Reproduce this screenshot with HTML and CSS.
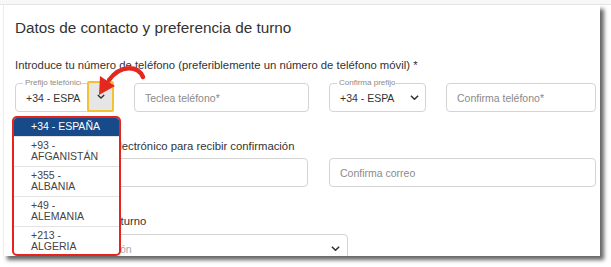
FILE: index.html
```html
<!DOCTYPE html>
<html lang="es">
<head>
<meta charset="utf-8">
<title>Datos de contacto y preferencia de turno</title>
<link rel="stylesheet" href="styles.css">
</head>
<body>
<div class="topbar"></div>
<main class="card">
  <h2 class="title">Datos de contacto y preferencia de turno</h2>

  <section class="group group-phone">
    <p class="label">Introduce tu número de teléfono (preferiblemente un número de teléfono móvil) *</p>
    <div class="phone-row">
      <div class="field select prefix">
        <span class="legend">Prefijo telefónico</span>
        <span class="value">+34 - ESPAÑA</span>
        <span class="toggle">
          <svg class="chevron" viewBox="0 0 9 5"><path d="M0.9 0.7 L4.5 4.2 L8.1 0.7" fill="none" stroke="#333" stroke-width="1.6"/></svg>
        </span>
        <ul class="dropdown">
          <li class="option selected">+34 - ESPAÑA</li>
          <li class="option">+93 - AFGANISTÁN</li>
          <li class="option">+355 - ALBANIA</li>
          <li class="option">+49 - ALEMANIA</li>
          <li class="option">+213 - ALGERIA</li>
        </ul>
      </div>
      <div class="field"><span class="placeholder">Teclea teléfono*</span></div>
      <div class="field select confirm-prefix">
        <span class="legend">Confirma prefijo</span>
        <span class="value">+34 - ESPAÑA</span>
        <svg class="chevron" viewBox="0 0 9 5"><path d="M0.9 0.7 L4.5 4.2 L8.1 0.7" fill="none" stroke="#333" stroke-width="1.6"/></svg>
      </div>
      <div class="field"><span class="placeholder">Confirma teléfono*</span></div>
    </div>
  </section>

  <section class="group">
    <p class="label">Introduce tu correo electrónico para recibir confirmación</p>
    <div class="email-row">
      <div class="field"><span class="placeholder">Correo electrónico</span></div>
      <div class="field"><span class="placeholder">Confirma correo</span></div>
    </div>
  </section>

  <section class="group">
    <p class="label">Selecciona franja de turno</p>
    <div class="field select turn">
      <span class="placeholder light">Selecciona una opción</span>
      <svg class="chevron" viewBox="0 0 9 5"><path d="M0.9 0.7 L4.5 4.2 L8.1 0.7" fill="none" stroke="#333" stroke-width="1.6"/></svg>
    </div>
  </section>

  <svg class="pointer-arrow" viewBox="0 0 611 267" aria-hidden="true">
    <path d="M143 77 C138 66 121 64 109 80" fill="none" stroke="#e4281f" stroke-width="4.5" stroke-linecap="round"/>
    <polygon points="100,76 115,86 99,95" fill="#e4281f"/>
  </svg>
</main>
</body>
</html>
```
FILE: styles.css
```css
* { box-sizing: border-box; }

html, body {
  margin: 0;
  padding: 0;
  background: #fff;
}

body {
  width: 611px;
  height: 267px;
  overflow: hidden;
  font-family: "Liberation Sans", Arial, sans-serif;
  color: #333;
}

.topbar {
  height: 5px;
  background: #f8f8f8;
  border-bottom: 1px solid #e6e6e6;
}

.card {
  position: relative;
  margin-left: 3px;
  width: 597px;
  height: 251px;
  padding: 14px 4px 0 11px;
  background: #fff;
  border-left: 1px solid #ececec;
  box-shadow: 4px 4px 4px rgba(0, 0, 0, 0.6);
  overflow: hidden;
}

.title {
  margin: 0;
  font-size: 15.3px;
  font-weight: normal;
  line-height: 18px;
  color: #333;
}

.group { margin-top: 27px; }
.group-phone { margin-top: 21px; }

.label {
  margin: 0;
  font-size: 11.3px;
  line-height: 14px;
  color: #333;
}

.phone-row {
  margin-top: 11px;
  display: grid;
  grid-template-columns: 99px 175px 97px 1fr;
  column-gap: 20px;
}

.email-row {
  margin-top: 5px;
  display: grid;
  grid-template-columns: 293px 1fr;
  column-gap: 21px;
}

.field {
  position: relative;
  height: 29px;
  border: 1px solid #d4d4d4;
  border-radius: 4px;
  padding: 0 10px;
  display: flex;
  align-items: center;
  font-size: 10.5px;
  background: #fff;
}

.placeholder { color: #8a8a8a; white-space: nowrap; }
.placeholder.light { color: #a8a8a8; }

.value {
  width: 55px;
  flex: none;
  overflow: hidden;
  white-space: nowrap;
  color: #333;
}

.legend {
  position: absolute;
  top: -6px;
  left: 7px;
  max-width: 58px;
  padding: 0 2px;
  overflow: hidden;
  white-space: nowrap;
  font-size: 8px;
  line-height: 10px;
  color: #8a8a8a;
  background: #fff;
}

.chevron {
  display: block;
  width: 9px;
  height: 5px;
  margin-left: auto;
}

.confirm-prefix { padding-right: 6px; }

.turn {
  margin-top: 6px;
  width: 333px;
  padding-right: 7px;
}

.toggle {
  position: absolute;
  left: 71px;
  top: -3px;
  width: 27px;
  height: 31px;
  border: 2px solid #f2c230;
  border-radius: 2px;
  background: #e6e6e6;
  display: flex;
  align-items: center;
  justify-content: center;
}

.toggle .chevron {
  margin: 0;
  width: 8px;
  height: 5px;
}

.dropdown {
  position: absolute;
  left: -4px;
  top: 32px;
  width: 109px;
  height: 140px;
  margin: 0;
  padding: 0;
  list-style: none;
  border: 2.5px solid #e8221c;
  border-radius: 5px;
  background: #fff;
  overflow: hidden;
  z-index: 2;
  font-size: 10.5px;
  line-height: 11.5px;
}

.option {
  padding: 3px 16px 3px 17px;
  border-top: 1px solid #e3e3e3;
  color: #444;
}

.option.selected {
  border-top: 0;
  background: #164a88;
  color: #fff;
}

.pointer-arrow {
  position: absolute;
  left: -4px;
  top: -5px;
  width: 611px;
  height: 267px;
  z-index: 3;
  pointer-events: none;
}
```
